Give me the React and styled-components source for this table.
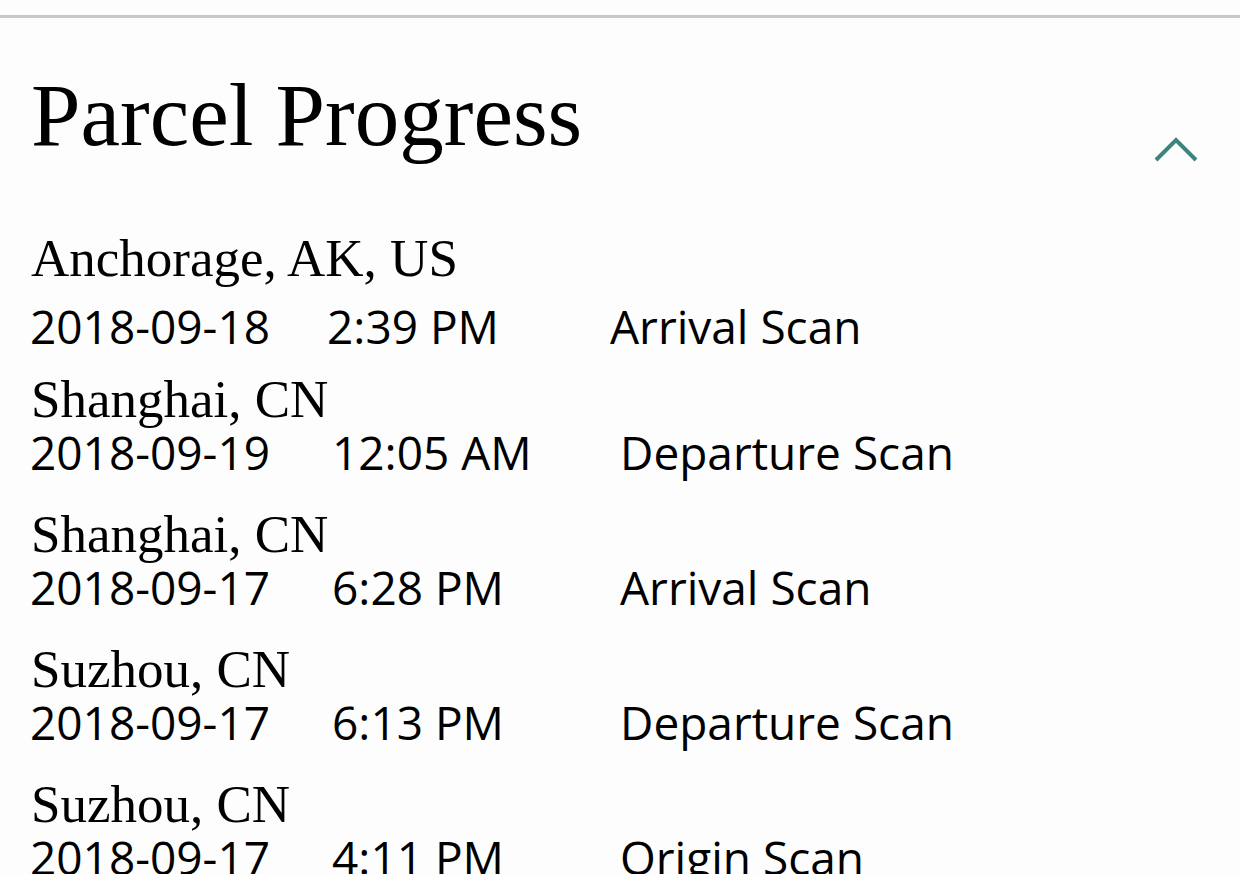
import styled, { createGlobalStyle } from 'styled-components';

const GlobalStyle = createGlobalStyle`
	html, body {
		margin: 0;
		padding: 0;
		background: #fdfdfd;
	}
	body {
		font-family: 'Open Sans', 'Liberation Sans', sans-serif;
		color: #000;
	}
`;

const scans = [
	{ place: 'Anchorage, AK, US', date: '2018-09-18', time: '2:39 PM', event: 'Arrival Scan' },
	{ place: 'Shanghai, CN', date: '2018-09-19', time: '12:05 AM', event: 'Departure Scan' },
	{ place: 'Shanghai, CN', date: '2018-09-17', time: '6:28 PM', event: 'Arrival Scan' },
	{ place: 'Suzhou, CN', date: '2018-09-17', time: '6:13 PM', event: 'Departure Scan' },
	{ place: 'Suzhou, CN', date: '2018-09-17', time: '4:11 PM', event: 'Origin Scan' }
];

const Chevron = () => (
	<svg width="48" height="28" viewBox="0 0 48 28" fill="none">
		<polyline points="4,24 24,4 44,24" stroke="#3d847b" strokeWidth="4" />
	</svg>
);

const App = () => {
	return (
		<Page>
			<GlobalStyle />
			<Section>
				<Header>
					<Title>Parcel Progress</Title>
					<Toggle aria-label="Collapse">
						<Chevron />
					</Toggle>
				</Header>
				<List>
					{scans.map((scan, i) => (
						<Item key={i} $lead={i === 0}>
							<Place>{scan.place}</Place>
							<Meta $lead={i === 0}>
								<span>{scan.date}</span>
								<span>{scan.time}</span>
								<span>{scan.event}</span>
							</Meta>
						</Item>
					))}
				</List>
			</Section>
		</Page>
	);
};

const Page = styled.div`
	padding-top: 15px;
	height: 874px;
	overflow: hidden;
	box-sizing: border-box;
`;
const Section = styled.section`
	border-top: 3px solid #cbc8c3;
	padding: 53px 40px 0 30px;
`;
const Header = styled.div`
	display: flex;
	justify-content: space-between;
	align-items: flex-end;
`;
const Title = styled.h2`
	margin: 0;
	font-family: 'Liberation Serif', serif;
	font-weight: 400;
	font-size: 89px;
	line-height: 1;
	padding-left: 1px;
`;
const Toggle = styled.button`
	border: none;
	background: none;
	padding: 0;
	margin-bottom: -4px;
	display: flex;
	cursor: pointer;
`;
const List = styled.div`
	margin-top: 72px;
	display: flex;
	flex-direction: column;
`;
const Item = styled.div`
	display: flex;
	flex-direction: column;
	gap: ${(p) => (p.$lead ? '18px' : '3px')};
	margin-bottom: ${(p) => (p.$lead ? '24px' : '33px')};
`;
const Place = styled.div`
	font-family: 'Liberation Serif', serif;
	font-size: 53px;
	line-height: 1;
	padding-left: 1px;
`;
const Meta = styled.div`
	display: grid;
	grid-template-columns: ${(p) => (p.$lead ? '297px 283px' : '302px 288px')} auto;
	font-size: 46px;
	line-height: 1;
	white-space: nowrap;
`;

export default App;
